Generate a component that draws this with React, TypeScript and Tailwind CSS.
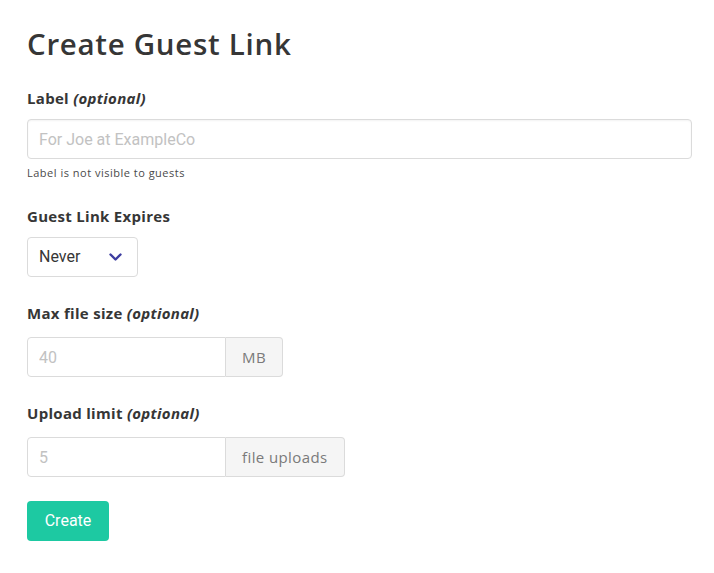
const karla = { fontFamily: '"Open Sans", "Noto Sans", sans-serif' };

const Label = ({ text, optional }: { text: string; optional?: boolean }) => (
  <label className="block text-[15px] font-bold text-[#363636] tracking-[0.3px] leading-[20px]" style={karla}>
    {text}
    {optional && <em className="font-bold"> (optional)</em>}
  </label>
);

const AddonInput = ({ placeholder, addon }: { placeholder: string; addon: string }) => (
  <div className="flex h-[40px]">
    <input
      placeholder={placeholder}
      className="w-[199px] h-full border border-[#dbdbdb] rounded-l-[4px] px-[11px] text-[16px] text-[#363636] placeholder:text-[#c2c2c2] outline-none font-['Roboto',sans-serif]"
    />
    <span
      className="h-full flex items-center px-[16px] bg-[#f5f5f5] border border-l-0 border-[#dbdbdb] rounded-r-[4px] text-[15px] text-[#7a7a7a] tracking-[0.4px]"
      style={karla}
    >
      {addon}
    </span>
  </div>
);

export default function App() {
  return (
    <div className="bg-white min-h-[573px] w-[714px] px-[27px] pt-[24px] font-['Roboto',sans-serif]">
      <h1 className="text-[29.5px] font-semibold text-[#363636] tracking-[0.7px] leading-[40px] mb-[24px]" style={karla}>
        Create Guest Link
      </h1>

      <div className="mb-[25px]">
        <Label text="Label" optional />
        <input
          placeholder="For Joe at ExampleCo"
          className="mt-[11px] block w-[665px] h-[40px] border border-[#dbdbdb] rounded-[4px] px-[11px] text-[16px] placeholder:text-[#c2c2c2] outline-none shadow-[inset_0_1px_2px_rgba(10,10,10,0.05)]"
        />
        <p className="mt-[6px] text-[11px] text-[#4a4a4a] leading-[16px] tracking-[0.5px]" style={karla}>
          Label is not visible to guests
        </p>
      </div>

      <div className="mb-[26px]">
        <Label text="Guest Link Expires" />
        <div className="mt-[11px] w-[111px] h-[40px] border border-[#dbdbdb] rounded-[4px] flex items-center justify-between pl-[11px] pr-[15px]">
          <span className="text-[16px] text-[#363636]">Never</span>
          <svg width="13" height="8" viewBox="0 0 13 8" fill="none" className="text-[#3d3da0]">
            <path d="M1.5 1.5l5 5 5-5" stroke="currentColor" strokeWidth="2.4" strokeLinecap="round" strokeLinejoin="round" />
          </svg>
        </div>
      </div>

      <div className="mb-[26px]">
        <Label text="Max file size" optional />
        <div className="mt-[14px]">
          <AddonInput placeholder="40" addon="MB" />
        </div>
      </div>

      <div className="mb-[24px]">
        <Label text="Upload limit" optional />
        <div className="mt-[14px]">
          <AddonInput placeholder="5" addon="file uploads" />
        </div>
      </div>

      <button className="h-[40px] w-[82px] rounded-[4px] bg-[#1dc9a2] text-white text-[16px]">
        Create
      </button>
    </div>
  );
}
